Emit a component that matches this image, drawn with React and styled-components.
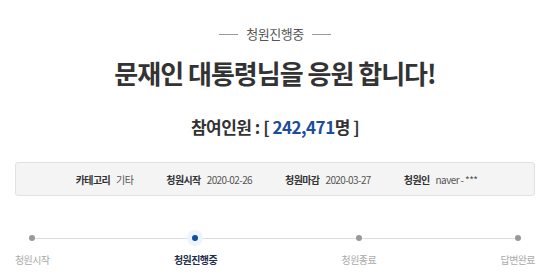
import React from "react";
import styled, { createGlobalStyle } from "styled-components";

const Global = createGlobalStyle`
  html, body { margin: 0; padding: 0; background: #fff; }
  body { font-family: "Noto Sans CJK KR", "Noto Sans", sans-serif; color: #333; }
`;

const Page = styled.div`
  width: 550px;
  padding: 26px 15px 0;
  box-sizing: border-box;
  display: flex;
  flex-direction: column;
  align-items: center;
`;

const Status = styled.div`
  display: flex;
  align-items: center;
  gap: 8px;
  font-size: 13px;
  line-height: 16px;
  color: #555;
  letter-spacing: -0.5px;
  &::before, &::after {
    content: "";
    width: 19px;
    height: 1px;
    background: #999;
  }
`;

const Title = styled.h1`
  margin: 14px 0 0;
  font-size: 26px;
  line-height: 34px;
  font-weight: 700;
  color: #333;
  letter-spacing: -1px;
`;

const Count = styled.div`
  margin-top: 25px;
  font-size: 17px;
  line-height: 24px;
  font-weight: 700;
  color: #333;
  letter-spacing: -0.5px;
`;

const Num = styled.span`
  color: #1b4d9b;
`;

const InfoBox = styled.div`
  margin-top: 23px;
  width: 100%;
  height: 34px;
  box-sizing: border-box;
  background: #f4f4f4;
  border: 1px solid #e2e2e2;
  border-radius: 3px;
  display: flex;
  align-items: center;
  justify-content: center;
  gap: 33px;
  padding-left: 3px;
`;

const InfoItem = styled.div`
  display: flex;
  align-items: center;
  gap: 6px;
  font-size: 10px;
  letter-spacing: -0.6px;
`;

const Label = styled.span`
  font-weight: 700;
  color: #333;
`;

const Value = styled.span`
  color: #555;
`;

const Steps = styled.div`
  position: relative;
  margin-top: 39px;
  width: 100%;
  display: flex;
  justify-content: space-between;
  &::before {
    content: "";
    position: absolute;
    left: 17px;
    right: 17px;
    top: 3px;
    height: 1px;
    background: #dddddd;
  }
`;

const Step = styled.div`
  position: relative;
  display: flex;
  flex-direction: column;
  align-items: center;
  gap: 12px;
`;

const Dot = styled.span`
  width: 6px;
  height: 6px;
  border-radius: 50%;
  background: ${(p) => (p.$active ? "#0c4ea3" : "#999")};
  box-shadow: ${(p) => (p.$active ? "0 0 0 5px #eef4fb" : "none")};
`;

const StepLabel = styled.span`
  font-size: 10px;
  line-height: 13px;
  letter-spacing: -0.6px;
  color: ${(p) => (p.$active ? "#1f2f4d" : "#aaa")};
  font-weight: ${(p) => (p.$active ? 700 : 400)};
`;

const info = [
  ["카테고리", "기타"],
  ["청원시작", "2020-02-26"],
  ["청원마감", "2020-03-27"],
  ["청원인", "naver - ***"],
];

const steps = ["청원시작", "청원진행중", "청원종료", "답변완료"];

export default function App() {
  return (
    <>
      <Global />
      <Page>
        <Status>청원진행중</Status>
        <Title>문재인 대통령님을 응원 합니다!</Title>
        <Count>
          참여인원 : [ <Num>242,471</Num>명 ]
        </Count>
        <InfoBox>
          {info.map(([l, v]) => (
            <InfoItem key={l}>
              <Label>{l}</Label>
              <Value>{v}</Value>
            </InfoItem>
          ))}
        </InfoBox>
        <Steps>
          {steps.map((s, i) => (
            <Step key={s}>
              <Dot $active={i === 1} />
              <StepLabel $active={i === 1}>{s}</StepLabel>
            </Step>
          ))}
        </Steps>
      </Page>
    </>
  );
}
